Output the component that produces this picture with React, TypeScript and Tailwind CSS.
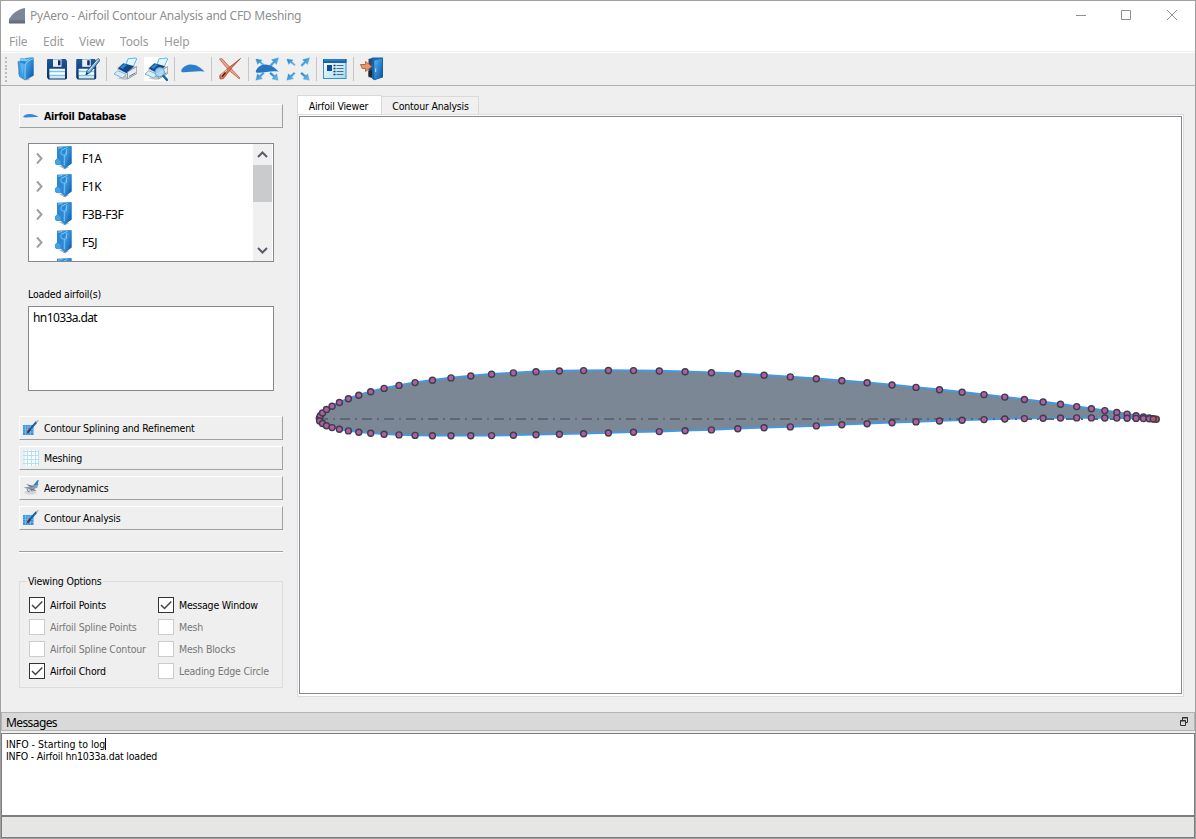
import React from "react";

type Pt = [number, number];

const upper: Pt[] = [
  [319.3, 418], [320.3, 415.5], [322.5, 412.8], [326.5, 409.3], [332.1, 406], [339.4, 402.3], [348.4, 398.5], [358.8, 395], [370.7, 391.5], [384.1, 388.2],
  [399, 385.2], [415.1, 382.4], [432.4, 380], [451, 377.7], [470.8, 375.8], [491.6, 374.1], [513.4, 372.7], [536, 371.6], [559.4, 370.8], [583.6, 370.4],
  [608.4, 370.3], [633.5, 370.4], [659.3, 370.8], [685.1, 371.5], [711.4, 372.5], [737.8, 373.6], [764.1, 375.1], [790.3, 376.7], [816.3, 378.6], [841.8, 380.5],
  [867.1, 382.5], [892, 384.8], [916, 387.2], [939.5, 389.5], [962.1, 392], [984, 394.4], [1004.8, 396.9], [1024.4, 399.3], [1043.1, 401.8], [1060.5, 404.1],
  [1076.7, 406.4], [1091.4, 408.5], [1104.8, 410.4], [1116.8, 412.3], [1127.1, 413.9], [1136.1, 415.5], [1143.4, 416.8], [1149.2, 417.8], [1153.2, 418.5], [1156.3, 419],
];
const lower: Pt[] = [
  [319.6, 420.8], [322.5, 423.3], [326.5, 425.6], [332.1, 427.4], [339.4, 429.1], [348.4, 430.7], [358.8, 432], [370.7, 433.1], [384.1, 434],
  [399, 434.7], [415.1, 435.2], [432.4, 435.5], [451, 435.6], [470.8, 435.6], [491.6, 435.4], [513.4, 435.1], [536, 434.6], [559.4, 434.1], [583.6, 433.5],
  [608.4, 432.8], [633.5, 432.1], [659.3, 431.4], [685.1, 430.6], [711.4, 429.7], [737.8, 428.6], [764.1, 427.6], [790.3, 426.7], [816.3, 425.7], [841.8, 424.6],
  [867.1, 423.6], [892, 422.6], [916, 421.7], [939.5, 420.8], [962.1, 420.1], [984, 419.4], [1004.8, 418.8], [1024.4, 418.4], [1043.1, 418], [1060.5, 417.8],
  [1076.7, 417.7], [1091.4, 417.7], [1104.8, 417.8], [1116.8, 417.9], [1127.1, 418.1], [1136.1, 418.2], [1143.4, 418.4], [1149.2, 418.6], [1153.2, 418.8],
];
const outline = [...upper, ...[...lower].reverse()].map((p) => p.join(",")).join(" ");

function AirfoilPlot() {
  return (
    <svg width="881" height="576" viewBox="300 117 881 576" className="block">
      <polygon points={outline} fill="#7b8794" stroke="#4698e0" strokeWidth="2" strokeLinejoin="round" />
      <path d="M318 419H1157" stroke="#5f6775" strokeWidth="1.8" strokeDasharray="10 5 2 5" />
      {[...upper, ...lower].map(([x, y], i) => (
        <circle key={i} cx={x} cy={y + 0.2} r="3" fill={x > 1152 ? "#b9565f" : "#b0609a"} stroke="#403c52" strokeWidth="1.4" />
      ))}
    </svg>
  );
}

function Gradients() {
  return (
    <svg width="0" height="0" className="absolute">
      <defs>
        <linearGradient id="blue" x1="0" y1="0" x2="1" y2="1">
          <stop offset="0" stopColor="#62b8ef" />
          <stop offset=".5" stopColor="#2b86d2" />
          <stop offset="1" stopColor="#0b4f9c" />
        </linearGradient>
        <linearGradient id="navy" x1="0" y1="0" x2="0" y2="1">
          <stop offset="0" stopColor="#1d5a9c" />
          <stop offset="1" stopColor="#0a2c66" />
        </linearGradient>
        <linearGradient id="paper" x1="0" y1="0" x2="1" y2="1">
          <stop offset="0" stopColor="#ffffff" />
          <stop offset="1" stopColor="#9fdcf6" />
        </linearGradient>
        <linearGradient id="arrow" x1="0" y1="0" x2="1" y2="1">
          <stop offset="0" stopColor="#1b7fd0" />
          <stop offset="1" stopColor="#6fc5f0" />
        </linearGradient>
        <linearGradient id="grey" x1="0" y1="0" x2="0" y2="1">
          <stop offset="0" stopColor="#7d8a9b" />
          <stop offset="1" stopColor="#5b6275" />
        </linearGradient>
      </defs>
    </svg>
  );
}

function Svg({ children, size = 24 }: { children: React.ReactNode; size?: number }) {
  return (
    <svg width={size} height={size} viewBox={`0 0 ${size} ${size}`} className="block shrink-0">
      {children}
    </svg>
  );
}

function FolderIcon() {
  return (
    <Svg>
      <path d="M7 20l6 3.500 3-1.500-2-3z" fill="#8f8582" opacity=".6" />
      <path d="M6 1.500L19.500.3v18L14 20.500 4.500 17.500z" fill="#2f8cd6" />
      <path d="M6 1.500L12 .8l-1 1.200 6-.8-4.500 3L6 3.800z" fill="#7ccaf2" />
      <path d="M4 4.500l7 2V23L5.500 19.500z" fill="#3f9ade" stroke="#2a7fc5" strokeWidth=".7" />
      <path d="M5.500 5.500l5 1.500-2 11z" fill="#8fd0f4" opacity=".4" />
      <path d="M11 7.500l2-3 6.500-3.500v17.700L11 23.300z" fill="url(#blue)" />
      <path d="M11 22.500V8l2.300-3.500 6-3" fill="none" stroke="#8bdcfb" strokeWidth=".9" />
    </Svg>
  );
}

function TreeFolderIcon() {
  return (
    <Svg>
      <path d="M6 19.500l7 4 4-2.500z" fill="#877d7b" opacity=".6" />
      <path d="M5 .8L19.500 0v17.500L13 22.500 9 19H4.500L3 17.500v-3l2-2z" fill="#2e87d3" />
      <path d="M3.300 14.500l2-2L8.500 15v4h-4L3 17.500z" fill="#45a3e3" />
      <path d="M12.300 8.500l2-5L19.500.5v17L12.300 22.800z" fill="url(#blue)" />
      <path d="M6 2.200l4.500-.6M9 4.500l6.500-3.200" fill="none" stroke="#8bd9f7" strokeWidth=".9" />
      <path d="M9 5v3l3.300 1.500v10M12.300 9.500l2.200-1V3" fill="none" stroke="#83d4f7" strokeWidth=".8" />
    </Svg>
  );
}

function FloppyArt() {
  return (
    <>
      <path d="M2.500 2h18l1.500 1.700V21.500l-1.500 1h-17L2 20.500V3z" fill="url(#navy)" />
      <rect x="8" y="2.300" width="8.500" height="7.500" fill="#e6f1f6" />
      <rect x="13" y="3.300" width="2.500" height="5" fill="#112a58" />
      <rect x="4.500" y="12" width="15.500" height="9.500" fill="#c9ebf8" />
      <path d="M4.500 12.500h15.500M4.500 16.500h15.500" stroke="#fff" strokeWidth="1.500" />
      <path d="M4.500 14.500h15.500M4.500 18.500h15.500" stroke="#68b9df" strokeWidth=".8" />
    </>
  );
}

function SaveIcon() {
  return <Svg><FloppyArt /></Svg>;
}

function SaveAsIcon() {
  return (
    <Svg>
      <g transform="translate(-1.800)"><FloppyArt /></g>
      <path d="M22 1.500l2 1.800-10 12.200-4 2.300 1-4z" fill="#6faedb" stroke="#31557f" strokeWidth=".9" />
      <path d="M22 2.500L12.500 14" stroke="#d6eefb" strokeWidth=".9" />
      <path d="M9.500 18.200l2.800-1.500-1.500-1.700z" fill="#3a2a2b" />
    </Svg>
  );
}

function PrinterArt() {
  return (
    <>
      <path d="M4 21.500l9 1.500 10-6 .5-3z" fill="#9c9494" opacity=".5" />
      <path d="M13 7.500L15 1.800 23 1l.7 1L20 10z" fill="#e3f5fd" stroke="#5fb6e6" strokeWidth="1" />
      <path d="M4.500 10.500L9.500 6.500l10 2 4.500 2v6L14.500 22 4 17z" fill="#b9c3cc" />
      <path d="M5 11.500L10.500 6.300l10.500 2.900-7.500 7z" fill="#0c468f" />
      <path d="M7 10.300l4.200-3.300 3 .8L9.500 12z" fill="#2f86cb" />
      <path d="M14.500 15l9.300-5.500v7L14.500 22z" fill="#e9edf0" stroke="#7f8b96" strokeWidth=".8" />
      <path d="M3.500 12.500l10.500 4v2.200L3 15z" fill="#f8fafc" />
      <path d="M1 17l3.700-3.300 8.800 3.600L9.500 21z" fill="#d3eefb" stroke="#6f9fbd" strokeWidth=".8" />
      <path d="M16 19.500l6.500-3.700" stroke="#606d7a" strokeWidth=".9" />
    </>
  );
}

function PrintIcon() {
  return <Svg><PrinterArt /></Svg>;
}

function PreviewIcon() {
  return (
    <Svg>
      <rect width="24" height="24" fill="#fff" />
      <PrinterArt />
      <circle cx="15.800" cy="15.300" r="4.600" fill="#a2dbf5" fillOpacity=".92" stroke="#6fa9ca" strokeWidth="1.200" />
      <path d="M19.500 19l3.500 3.800" stroke="#1763b4" strokeWidth="2.500" strokeLinecap="round" />
    </Svg>
  );
}

function AirfoilIcon() {
  return (
    <Svg>
      <path d="M.3 14.200C0 12 3.500 8 9.500 7.600c5.500-.1 10 2.700 14 7.100-8-1.200-15 .8-21.500.6-1 0-1.600-.5-1.700-1.100z" fill="#2c7fce" />
    </Svg>
  );
}

function CutIcon() {
  return (
    <Svg>
      <path d="M1.500 2l2.300-.5L13 11.500l9 9.500-.8.800L10.500 13z" fill="#eaa78d" stroke="#b94c2e" strokeWidth=".7" />
      <path d="M22.500 1.500L14 10.500 5.500 21.500l-3.500.5-.3-3.500L11 10.500z" fill="#d67b52" stroke="#9c3b22" strokeWidth=".7" />
      <path d="M3 18.500l6-5.700" stroke="#ffd9c2" strokeWidth="1" />
      <path d="M4 19.500l3.500-4" stroke="#43211c" strokeWidth="1.500" />
    </Svg>
  );
}

function Arrows() {
  return (
    <g fill="url(#arrow)" stroke="#3a9bdb" strokeWidth=".3">
      <path d="M.8 2l6.400.9-1.500 1.500L9.300 7.600 8.300 8.700 4.500 5.600 2.700 7.500z" />
      <path d="M23.500 .8l-7 2 1.800 1.600-3.600 3.700L16.200 9.500l3.500-3.700 1.900 1.700z" />
      <path d="M.8 23.200l6.700-1.500-1.700-1.700L9.300 16.500 8 15.200l-3.600 3.300-2-1.700z" />
      <path d="M23.300 23.300L17 21.900l1.500-1.700-4-3.500 1.300-1.500 4.100 3.300 1.800-1.700z" />
    </g>
  );
}

function FitAirfoilIcon() {
  return (
    <Svg>
      <Arrows />
      <path d="M.8 14.800C1 11.500 5 7.700 10 7.400c5.500 0 9.800 3 13.700 7.300-7-1.200-13 1-20.700 1.100-1.200 0-2.200-.3-2.200-1z" fill="#2476c4" />
    </Svg>
  );
}

function FitAllIcon() {
  return <Svg><Arrows /></Svg>;
}

function WindowIcon() {
  return (
    <Svg>
      <rect x=".5" y="2.500" width="22.500" height="19" fill="url(#paper)" stroke="#3b8fc5" />
      <rect x="0" y="2" width="23.500" height="4" fill="#1765b1" />
      <path d="M1 3h21" stroke="#4ba4df" strokeWidth=".8" />
      <rect x="4" y="8" width="5" height="6" fill="#104a9c" />
      <path d="M13.500 8.500h7M13.500 11.500h7M13.500 14.500h7M13.500 17.500h7" stroke="#526d7c" strokeWidth="1" />
      <path d="M10.500 8.500h2M10.500 11.500h2M10.500 14.500h2M10.500 17.500h2" stroke="#20394d" strokeWidth="1.500" />
    </Svg>
  );
}

function ExitIcon() {
  return (
    <Svg>
      <path d="M8.500 2L12 1v19l-3.500-1z" fill="#274e6c" />
      <path d="M8.500 14l4-1v8l-4-1z" fill="#202a33" />
      <path d="M12 .5h11v19.800L14 23l-2-1.500z" fill="#1b66ae" />
      <path d="M14 3.300L22.500 1v19L14 23z" fill="url(#blue)" stroke="#1b548f" strokeWidth=".5" />
      <rect x="15" y="11.500" width="1.200" height="3.500" fill="#9be1fb" />
      <path d="M.5 7.500h5V4.500l6.500 5-6.500 5v-3H2.200z" fill="#e99670" stroke="#a85035" strokeWidth=".8" />
    </Svg>
  );
}

function RefineIcon() {
  return (
    <Svg size={16}>
      <rect x="0" y="5" width="10.500" height="10" fill="#3a93da" />
      <path d="M0 7h10.500M0 9.500h10.500M0 12h10.500M2.500 5v10M5 5v10M7.500 5v10" stroke="#8cc8f0" strokeWidth=".6" />
      <path d="M13.500 2L6 10.500" stroke="#1b5ea8" strokeWidth="2" />
      <path d="M7 9.300l-2.500 3.500" stroke="#612c28" strokeWidth="2" />
      <path d="M13.200 2.300L15.500.3" stroke="#cfad98" strokeWidth="1.500" />
    </Svg>
  );
}

function GridIcon() {
  return (
    <Svg size={16}>
      <rect width="16" height="16" fill="#fbfeff" />
      <path d="M0 1.500h16M0 5.500h16M0 9.500h16M0 13.500h16M1 0v16M4.500 0v16M8.500 0v16M12.500 0v16M15.500 0v16" stroke="#b0def3" strokeWidth=".9" />
    </Svg>
  );
}

function PlaneIcon() {
  return (
    <Svg size={16}>
      <ellipse cx="7.500" cy="12.500" rx="6" ry="2" fill="#c9c9ca" opacity=".7" />
      <path d="M.5 7.500L8 6.300l4-2.500 3 .5-.5 3.200-6 2.700z" fill="#8b9cae" />
      <path d="M3 4l6 1.500 1 1.300-2.500.5zM6 8.500l5 .5 2.500 2-5.500-.5z" fill="#6d7f91" />
      <path d="M11 4.500L14.500 0l1.300.3-1 3.200 1 1-4.300.8z" fill="#2c83ce" />
      <path d="M4 9l1 2.500 2-.5M8 9.500l1 2" stroke="#7c858e" fill="none" />
    </Svg>
  );
}

function SmallAirfoilIcon() {
  return (
    <Svg size={16}>
      <path d="M0 9C1 7 4 6 7 6.100c3.500.1 6 1.400 8.500 3-4.500-.5-9 .5-13.500.4z" fill="#3589d6" />
    </Svg>
  );
}

function Sep() {
  return <div className="mx-[6px] h-[24px] w-px shrink-0 bg-[#c6c6c6]" />;
}

function Toolbar() {
  return (
    <div className="flex h-[33px] items-start border-b border-[#b0b0b0] bg-[#efefef] pl-[4px] pt-[4px]">
      <div className="mr-[7px] flex h-[25px] w-[2px] flex-col justify-between">
        {[0, 1, 2, 3, 4, 5, 6].map((i) => <div key={i} className="h-[2px] w-[2px] bg-[#bcbcbc]" />)}
      </div>
      <div className="flex gap-[7px]"><FolderIcon /><SaveIcon /><SaveAsIcon /></div>
      <Sep />
      <div className="flex gap-[7px]"><PrintIcon /><PreviewIcon /></div>
      <Sep /><AirfoilIcon /><Sep /><CutIcon /><Sep />
      <div className="flex gap-[7px]"><FitAirfoilIcon /><FitAllIcon /></div>
      <Sep /><WindowIcon /><Sep /><ExitIcon />
    </div>
  );
}

function ToolButton({ icon, children, bold }: { icon: React.ReactNode; children: string; bold?: boolean }) {
  return (
    <div className="flex h-[24px] items-center border-b border-l border-r border-t border-b-[#a0a0a0] border-l-white border-r-[#a0a0a0] border-t-white pl-[3px]">
      {icon}
      <span className={bold ? "ml-[5px] text-[10.5px] font-bold tracking-[-0.24px]" : "ml-[5px]"}>{children}</span>
    </div>
  );
}

function Check({ label, on }: { label: string; on?: boolean }) {
  return (
    <div className={on ? "flex h-[22px] items-center text-black" : "flex h-[22px] items-center text-[#787878]"}>
      <div className={on ? "h-[16px] w-[16px] border border-[#333] bg-white" : "h-[16px] w-[16px] border border-[#ccc] bg-white"}>
        {on && (
          <svg width="14" height="14" viewBox="0 0 14 14" className="block">
            <path d="M2 7l3.500 3.500L12.300 3.500" fill="none" stroke="#444" strokeWidth="1.500" />
          </svg>
        )}
      </div>
      <span className="ml-[5px]">{label}</span>
    </div>
  );
}

function Sidebar() {
  return (
    <div className="flex w-[264px] shrink-0 flex-col">
      <ToolButton icon={<SmallAirfoilIcon />} bold>Airfoil Database</ToolButton>
      <div className="ml-[9px] mt-[15px] flex h-[119px] w-[246px] overflow-hidden border border-[#828790] bg-white pr-px font-['Noto_Sans',sans-serif] text-[12px] tracking-[-0.4px]">
        <div className="flex-1">
          {["F1A", "F1K", "F3B-F3F", "F5J", ""].map((t) => (
            <div key={t} className="flex h-[28px] items-center pl-[5px]">
              <svg width="12" height="12" viewBox="0 0 12 12" className={t ? "" : "invisible"}>
                <path d="M3 1.500l4.500 5L3 11.500" fill="none" stroke="#a0a0a0" strokeWidth="2" />
              </svg>
              <div className="ml-[6px] mt-[-1px]"><TreeFolderIcon /></div>
              <span className="ml-[6px] mt-[2px]">{t}</span>
            </div>
          ))}
        </div>
        <div className="flex w-[19px] flex-col items-center bg-[#f0f0f0]">
          <svg width="19" height="21" viewBox="0 0 19 21" className="shrink-0"><path d="M5 13l4.500-4.500L14 13" fill="none" stroke="#5c5a6b" strokeWidth="2" /></svg>
          <div className="h-[37px] w-[19px] shrink-0 bg-[#cacbcd]" />
          <svg width="19" height="21" viewBox="0 0 19 21" className="mt-auto shrink-0"><path d="M5 8l4.500 4.500L14 8" fill="none" stroke="#5c5a6b" strokeWidth="2" /></svg>
        </div>
      </div>
      <div className="ml-[9px] mt-[24px] h-[16px] leading-[16px]">Loaded airfoil(s)</div>
      <div className="ml-[9px] mt-[4px] h-[85px] w-[246px] border border-[#828790] bg-white pl-[4px] pt-[2px] font-['Noto_Sans',sans-serif] text-[12px] leading-[17px] tracking-[-0.6px]">hn1033a.dat</div>
      <div className="mt-[25px] flex flex-col gap-[6px]">
        <ToolButton icon={<RefineIcon />}>Contour Splining and Refinement</ToolButton>
        <ToolButton icon={<GridIcon />}>Meshing</ToolButton>
        <ToolButton icon={<PlaneIcon />}>Aerodynamics</ToolButton>
        <ToolButton icon={<RefineIcon />}>Contour Analysis</ToolButton>
      </div>
      <div className="mt-[21px] h-[2px] border-b border-t border-b-white border-t-[#a0a0a0]" />
      <div className="mt-[28px] h-[107px] border border-[#dcdcdc]">
        <div className="ml-[7px] mt-[-9px] flex h-[16px] w-[76px] items-center bg-[#efefef] pl-px">Viewing Options</div>
        <div className="ml-[9px] mt-[5px] flex">
          <div className="w-[129px]">
            <Check on label="Airfoil Points" />
            <Check label="Airfoil Spline Points" />
            <Check label="Airfoil Spline Contour" />
            <Check on label="Airfoil Chord" />
          </div>
          <div>
            <Check on label="Message Window" />
            <Check label="Mesh" />
            <Check label="Mesh Blocks" />
            <Check label="Leading Edge Circle" />
          </div>
        </div>
      </div>
    </div>
  );
}

function Viewer() {
  return (
    <div className="mt-[9px] ml-[14px] flex w-[887px] shrink-0 flex-col">
      <div className="flex h-[19px] items-end">
        <div className="flex h-[19px] w-[85px] items-center justify-center border-l border-r border-t border-[#d9d9d9] bg-white pr-[2px] pt-[2px]">Airfoil Viewer</div>
        <div className="flex h-[18px] w-[97px] items-center justify-center border-r border-t border-[#d9d9d9] bg-[#f0f0f0] pl-px pt-px">Contour Analysis</div>
      </div>
      <div className="h-[583px] border border-[#dcdcdc] bg-white p-px">
        <div className="h-[578px] w-[883px] border border-[#828790] bg-white">
          <AirfoilPlot />
        </div>
      </div>
    </div>
  );
}

function TitleBar() {
  return (
    <div className="flex h-[30px] items-center bg-white font-['Noto_Sans',sans-serif] text-[12px] tracking-[-0.25px] text-[#8f8f8f]">
      <svg width="16" height="16" viewBox="0 0 16 16" className="ml-[8px] mt-[-1px]">
        <path d="M0 12C2 6 9 1 16 0v12z" fill="#7b8797" />
        <rect y="10.500" width="16" height="5" fill="url(#grey)" />
      </svg>
      <span className="ml-[5px]">PyAero - Airfoil Contour Analysis and CFD Meshing</span>
      <svg width="106" height="14" viewBox="0 0 106 14" className="mb-[2px] ml-auto mr-[15px]" fill="none" stroke="#8f8f8f">
        <path d="M2 7.500h10M47.500 2.500h9v9h-9zM93 2l10 10M103 2L93 12" />
      </svg>
    </div>
  );
}

export default function App() {
  return (
    <div className="flex h-[839px] w-[1196px] flex-col overflow-hidden whitespace-nowrap border border-[#a0a0a0] bg-[#efefef] font-['DejaVu_Sans_Condensed','DejaVu_Sans',sans-serif] text-[10.5px] leading-none tracking-[-0.2px] text-black">
      <Gradients />
      <TitleBar />
      <div className="flex h-[20px] items-center bg-white pl-[8px] pt-[2px] font-['Noto_Sans',sans-serif] text-[12px] tracking-[-0.2px] text-[#9a9a9a]">
        <span className="w-[34px]">File</span>
        <span className="w-[36px]">Edit</span>
        <span className="w-[41px]">View</span>
        <span className="w-[44px]">Tools</span>
        <span>Help</span>
      </div>
      <div className="h-[2px] shrink-0 border-t border-[#efefef] bg-white" />
      <Toolbar />
      <div className="flex h-[626px] shrink-0 pl-[18px]">
        <div className="pt-[18px]"><Sidebar /></div>
        <Viewer />
      </div>
      <div className="flex h-[19px] shrink-0 items-center justify-between border border-[#b4b4b4] bg-[#d9d9d9] pl-[4px] pr-[4px] font-['Noto_Sans',sans-serif] text-[12px] tracking-[-0.6px]">
        <span className="mt-[2px]">Messages</span>
        <svg width="10" height="10" viewBox="0 0 10 10" fill="none" stroke="#352f37">
          <path d="M2.500 3V.5h5v5H6M2 1h6M.5 3.500h5v5h-5zM0 4h6" />
        </svg>
      </div>
      <div className="mt-[2px] h-[84px] shrink-0 border border-b-2 border-[#7d7d7d] bg-white pl-[4px] pt-[4px] leading-[12px]">
        <div className="flex items-center tracking-[-0.02px]">INFO - Starting to log<span className="h-[12px] w-px bg-black" /></div>
        <div>INFO - Airfoil hn1033a.dat loaded</div>
      </div>
      <div className="h-[21px] shrink-0 border-b border-l border-r border-[#7d7d7d] bg-[#e6e6e5]" />
    </div>
  );
}
